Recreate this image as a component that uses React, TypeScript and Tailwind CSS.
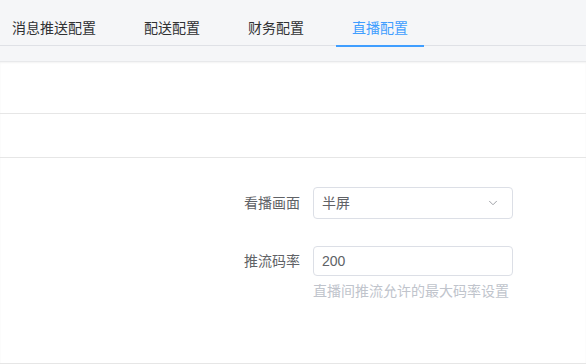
import { ChevronDown } from "lucide-react";

const TABS = ["消息推送配置", "配送配置", "财务配置", "直播配置"];
const ACTIVE = 3;

export default function App() {
  return (
    <div className="h-[364px] w-[586px] overflow-hidden bg-white font-['Liberation_Sans','Noto_Sans_CJK_SC',sans-serif] text-sm">
      <div className="bg-[#f5f6f8] pb-[15px]">
        <div className="flex h-[46px] border-b border-[#dfe1e6] pl-3">
          {TABS.map((t, i) => (
            <div
              key={t}
              className={
                "relative h-[46px] pt-[18px] leading-[20px] " +
                (i === 0 ? "pr-4 " : "ml-4 px-4 ") +
                (i === ACTIVE ? "text-[#409eff]" : "text-[#303133]")
              }
            >
              {t}
              {i === ACTIVE && <span className="absolute bottom-[-1px] left-0 h-[2px] w-full bg-[#409eff]" />}
            </div>
          ))}
        </div>
      </div>

      <div className="border-t border-[#e8e9eb] shadow-[inset_0_1px_2px_rgba(0,0,0,0.05)]">
        <div className="h-[52px] border-b border-[#e6e6e6]" />
        <div className="h-[44px] border-b border-[#e6e6e6]" />
        <div className="h-[206px] border-b border-[#e6e6e6] pt-[29px]">
          <div className="flex items-center">
            <label className="w-[313px] pr-[13px] text-right text-[#606266]">看播画面</label>
            <div className="flex h-[32px] w-[200px] items-center justify-between rounded border border-[#dcdfe6] px-2 text-[#606266]">
              <span>半屏</span>
              <ChevronDown className="mr-[4px] h-[14px] w-[14px] text-[#909399]" strokeWidth={1.5} />
            </div>
          </div>
          <div className="mt-[27px] flex items-center">
            <label className="w-[313px] pr-[13px] text-right text-[#606266]">推流码率</label>
            <div className="flex h-[30px] w-[200px] items-center rounded border border-[#dcdfe6] px-2 text-[#606266]">
              200
            </div>
          </div>
          <p className="ml-[313px] mt-[5px] leading-[20px] text-[#c0c4cc]">直播间推流允许的最大码率设置</p>
        </div>
      </div>
    </div>
  );
}
